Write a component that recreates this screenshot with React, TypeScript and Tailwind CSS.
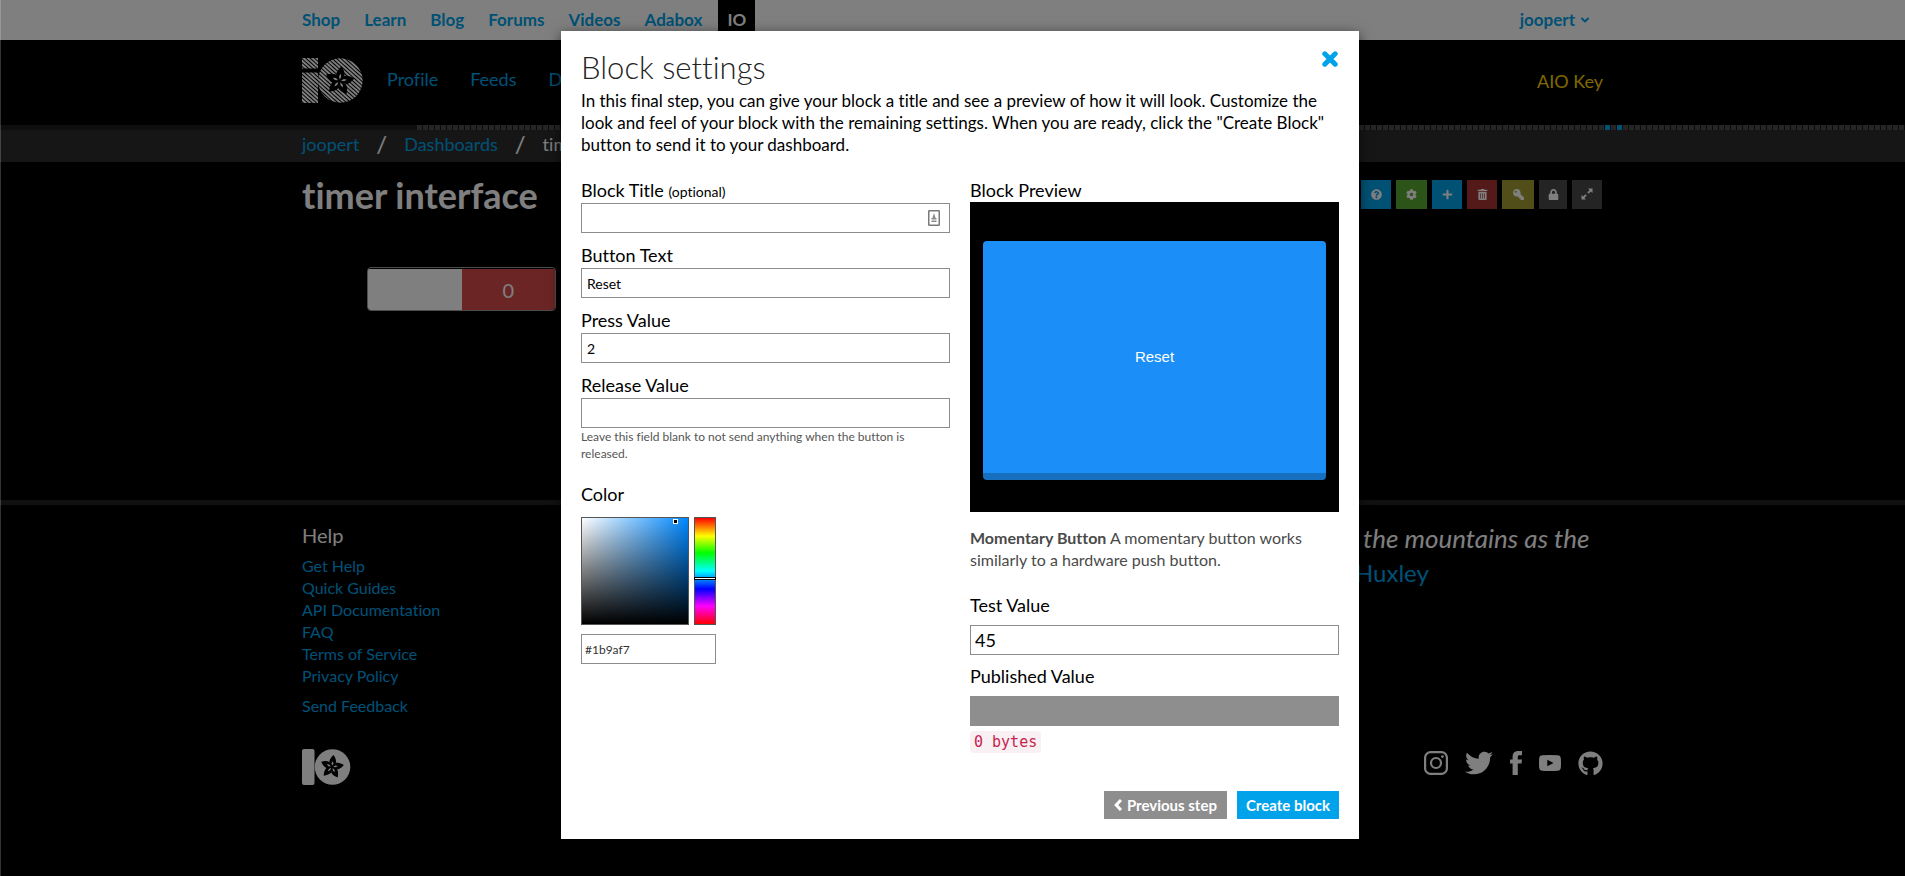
import React from 'react';
import { FaQuestionCircle, FaCog, FaPlus, FaTrashAlt, FaKey, FaLock, FaTwitter, FaGithub } from 'react-icons/fa';
import { ChevronDown } from 'lucide-react';

const PETALS = [0, 72, 144, 216, 288];

function Flower({ x, y, scale }: { x: number; y: number; scale: number }) {
  return (
    <g transform={`translate(${x} ${y}) rotate(8) scale(${scale})`}>
      {PETALS.map((a) => (
        <path key={a} transform={`rotate(${a})`} d="M0 -12 C2 -9.6 3.6 -7 3.3 -4.6 L1 0 L-1 0 L-3.3 -4.6 C-3.6 -7 -2 -9.6 0 -12Z" fill="#000" />
      ))}
      {PETALS.map((a) => (
        <path key={a} transform={`rotate(${a})`} d="M0 -1.2 L0.9 -3.6 L0 -6 L-0.9 -3.6Z" fill="#fff" />
      ))}
    </g>
  );
}

function StripedLogo() {
  return (
    <svg viewBox="0 0 61 45" className="h-[45px] w-[61px]" aria-label="Adafruit IO" role="img">
      <defs>
        <pattern id="stripes" width="2.9" height="2.9" patternUnits="userSpaceOnUse" patternTransform="rotate(-48)">
          <rect width="1.9" height="2.9" fill="#fff" />
        </pattern>
      </defs>
      <path d="M0 0H16V10.5H0Z M0 14.5H16V45H0Z" fill="url(#stripes)" />
      <circle cx="38.3" cy="22.5" r="22.3" fill="url(#stripes)" />
      <Flower x={37.5} y={23} scale={1.25} />
    </svg>
  );
}

function SolidLogo() {
  return (
    <svg viewBox="0 0 49 36" className="h-9 w-[49px]" aria-label="Adafruit IO" role="img">
      <rect width="12.5" height="36" rx="2" fill="#fff" />
      <circle cx="30.5" cy="18" r="17.8" fill="#fff" />
      <Flower x={30} y={18} scale={1} />
    </svg>
  );
}

const SITE_LINKS = ['Shop', 'Learn', 'Blog', 'Forums', 'Videos', 'Adabox'];
const HELP_LINKS = ['Get Help', 'Quick Guides', 'API Documentation', 'FAQ', 'Terms of Service', 'Privacy Policy'];

function ExpandIcon() {
  return (
    <svg viewBox="0 0 12 12" className="size-3" fill="currentColor">
      <path d="M7 0.5H11.5V5L9.9 3.4L7.6 5.7L6.3 4.4L8.6 2.1Z M5 11.5H0.5V7L2.1 8.6L4.4 6.3L5.7 7.6L3.4 9.9Z" />
    </svg>
  );
}

const TOOLS = [
  { label: 'Help', style: 'w-[30px] bg-[#00a2e9]', icon: <FaQuestionCircle /> },
  { label: 'Settings', style: 'w-[31px] bg-[#5aa830]', icon: <FaCog /> },
  { label: 'Add block', style: 'w-[30px] bg-[#00a2e9]', icon: <FaPlus /> },
  { label: 'Delete', style: 'w-[30px] bg-[#a93434]', icon: <FaTrashAlt /> },
  { label: 'Key', style: 'w-8 bg-[#a39c34]', icon: <FaKey className="-scale-x-100" /> },
  { label: 'Lock', style: 'w-7 bg-[#484848]', icon: <FaLock /> },
  { label: 'Full screen', style: 'w-[30px] bg-[#484848]', icon: <ExpandIcon /> },
];

function Page() {
  return (
    <div className="min-h-screen bg-black text-white">
      <div className="h-10 bg-white">
        <div className="mx-auto flex h-full max-w-[1301px] justify-between text-[17px] leading-5 font-bold text-[#00a2e9]">
          <nav className="flex items-center gap-6">
            {SITE_LINKS.map((l) => (
              <a key={l} href="#">{l}</a>
            ))}
            <a href="#" className="-ml-2 flex h-full w-[37px] items-center justify-center bg-black text-white">IO</a>
          </nav>
          <button type="button" className="mr-3 flex items-center gap-1">
            joopert <ChevronDown className="size-3" strokeWidth={4} />
          </button>
        </div>
      </div>

      <header className="mx-auto flex h-[85px] max-w-[1301px] items-center justify-between pb-1 text-lg">
        <div className="flex items-center">
          <StripedLogo />
          <nav className="ml-6 flex gap-8 pb-1 text-[#00a2e9]">
            <a href="#">Profile</a>
            <a href="#">Feeds</a>
            <a href="#">Dashboards</a>
          </nav>
        </div>
        <a href="#" className="text-[#ffd000]">AIO Key</a>
      </header>

      <div className="flex h-[5px] bg-[#1d1d1d]">
        <div className="w-[417px]" />
        <div className="flex flex-1 bg-[repeating-linear-gradient(90deg,#4a4a4a_0_5px,#151515_5px_6px)]">
          <span className="ml-[1188px] w-[5px] bg-[#00a2e9]" />
          <span className="ml-[7px] w-[5px] bg-[#00a2e9]" />
        </div>
      </div>

      <div className="h-8 bg-[#2d2d2d]">
        <div className="mx-auto flex h-full max-w-[1301px] items-center gap-[17px] pb-1 text-lg">
          <a href="#" className="text-[#00a2e9]">joopert</a>
          <span className="text-2xl leading-6">/</span>
          <a href="#" className="text-[#00a2e9]">Dashboards</a>
          <span className="text-2xl leading-6">/</span>
          <span>timer interface</span>
        </div>
      </div>

      <div className="mx-auto flex h-[66px] max-w-[1301px] items-center justify-between">
        <h1 className="text-4xl font-bold">timer interface</h1>
        <div className="flex gap-[5px] pr-px pb-0.5">
          {TOOLS.map((t) => (
            <button key={t.label} type="button" aria-label={t.label} className={`flex h-[29px] items-center justify-center text-[11px] ${t.style}`}>
              {t.icon}
            </button>
          ))}
        </div>
      </div>

      <main className="mx-auto h-[272px] max-w-[1301px] px-[65px] pt-[39px]">
        <button type="button" className="flex h-11 w-[189px] overflow-hidden rounded border border-[#999] pt-px text-xl">
          <span className="h-full flex-1 bg-white" />
          <span className="flex h-full flex-1 items-center justify-center bg-[#d64a4a]">0</span>
        </button>
      </main>

      <footer className="border-t-5 border-[#222] pt-4">
        <div className="mx-auto flex max-w-[1301px] justify-between">
          <div>
            <h2 className="text-xl leading-7">Help</h2>
            <ul className="pt-1.5 text-base leading-[22px] text-[#00a2e9]">
              {HELP_LINKS.map((l) => (
                <li key={l}><a href="#">{l}</a></li>
              ))}
              <li className="pt-2"><a href="#">Send Feedback</a></li>
            </ul>
          </div>
          <blockquote className="w-60 text-[26px] leading-[34px]">
            <p className="italic">the mountains as the</p>
            <a href="#" className="-ml-2 text-2xl text-[#00a2e9]">Huxley</a>
          </blockquote>
        </div>
        <div className="mx-auto flex max-w-[1301px] items-center justify-between pt-8">
          <SolidLogo />
          <div className="flex items-center gap-[17px] pb-2">
            <a href="#" aria-label="Instagram">
              <svg viewBox="0 0 24 24" className="size-6" fill="none" stroke="currentColor" strokeWidth="2.2">
                <rect x="1.1" y="1.1" width="21.8" height="21.8" rx="5.5" />
                <circle cx="12" cy="12" r="5" />
                <circle cx="18.4" cy="5.6" r="1.4" fill="currentColor" stroke="none" />
              </svg>
            </a>
            <a href="#" aria-label="Twitter"><FaTwitter className="size-7" /></a>
            <a href="#" aria-label="Facebook">
              <svg viewBox="0 0 12 24" className="h-6 w-3" fill="currentColor">
                <path d="M2.6 24V12.6H0V8.6H2.6V5.8C2.6 2.2 4.4 0 8.2 0H12V4.2H9.6C8.2 4.2 7.8 4.8 7.8 6V8.6H12L11.5 12.6H7.8V24Z" />
              </svg>
            </a>
            <a href="#" aria-label="YouTube">
              <svg viewBox="0 0 22 16" className="h-4 w-[22px]" fill="currentColor">
                <path fillRule="evenodd" d="M3 0.3Q11 -0.3 19 0.3Q21.6 0.5 21.8 3Q22.2 8 21.8 13Q21.6 15.5 19 15.7Q11 16.3 3 15.7Q0.4 15.5 0.2 13Q-0.2 8 0.2 3Q0.4 0.5 3 0.3Z M8.3 4.8V11.2L14.5 8Z" />
              </svg>
            </a>
            <a href="#" aria-label="GitHub"><FaGithub className="size-[25px]" /></a>
          </div>
        </div>
      </footer>
    </div>
  );
}

function Field({ id, label, note, value }: { id: string; label: string; note?: string; value?: string }) {
  return (
    <div>
      <label htmlFor={id} className="block text-lg leading-6 text-black">
        {label} {note && <span className="text-sm">{note}</span>}
      </label>
      <div className="relative mt-px">
        <input id={id} defaultValue={value} className="block h-[30px] w-full border border-[#8c8c8c] bg-white px-[5px] text-sm text-black outline-none" />
        {note && (
          <svg viewBox="0 0 12 16" className="absolute top-[7px] right-[10px] h-4 w-3">
            <rect x="0.75" y="0.75" width="10.5" height="14.5" rx="0.5" fill="#fff" stroke="#7a7a7a" strokeWidth="1.5" />
            <path d="M6 3L7.6 8H4.4Z M3.5 8H8.5V9.5H3.5Z M3.5 10.5H8.5V12H3.5Z" fill="#8a8a8a" />
          </svg>
        )}
      </div>
    </div>
  );
}

function Modal() {
  return (
    <div role="dialog" aria-labelledby="dialog-title" className="w-[798px] bg-white p-5 pt-4 text-[#333] shadow-[0_3px_12px_rgba(0,0,0,0.6)]">
      <div className="flex items-start justify-between">
        <h2 id="dialog-title" className="pb-0.5 text-[31px] leading-10 font-light text-[#222]">Block settings</h2>
        <button type="button" aria-label="Close" className="mt-1 mr-px text-[#00a2e9]">
          <svg viewBox="0 0 16 16" className="size-4" stroke="currentColor" strokeWidth="5" strokeLinecap="round">
            <path d="M2.8 2.8L13.2 13.2M13.2 2.8L2.8 13.2" />
          </svg>
        </button>
      </div>
      <p className="pt-px text-[17px] leading-[22px] text-black">
        In this final step, you can give your block a title and see a preview of how it will look. Customize the look and feel of
        your block with the remaining settings. When you are ready, click the "Create Block" button to send it to your dashboard.
      </p>

      <div className="grid grid-cols-2 gap-5 pt-[22px]">
        <div>
          <div className="flex flex-col gap-2.5">
            <Field id="title" label="Block Title" note="(optional)" />
            <Field id="text" label="Button Text" value="Reset" />
            <Field id="press" label="Press Value" value="2" />
            <Field id="release" label="Release Value" />
          </div>
          <p className="text-xs leading-[17px] text-[#555]">Leave this field blank to not send anything when the button is released.</p>
          <label htmlFor="color" className="block pt-5 text-lg leading-6 text-black">Color</label>
          <div className="flex gap-[5px] pt-[11px]">
            <div className="relative size-[108px] border border-[#555] bg-[linear-gradient(to_top,#000,transparent),linear-gradient(to_right,#fff,#0088ff)]">
              <span className="absolute top-px left-[91px] size-[5px] border border-white bg-black" />
            </div>
            <div className="relative h-[108px] w-[22px] border border-[#555] bg-[linear-gradient(#f00,#ff0_17%,#0f0_33%,#0ff_50%,#00f_67%,#f0f_83%,#f00)]">
              <span className="absolute inset-x-[-1px] top-[59px] h-[3px] border border-black bg-white" />
            </div>
          </div>
          <input id="color" defaultValue="#1b9af7" className="mt-[9px] block h-[30px] w-[135px] border border-[#8c8c8c] px-[3px] text-xs text-[#333] outline-none" />
        </div>

        <div>
          <h3 className="text-lg leading-6 text-black">Block Preview</h3>
          <div className="bg-black px-[13px] pt-[39px] pb-8">
            <button type="button" className="block h-[239px] w-full rounded border-b-7 border-[#1670bf] bg-[#1b8ff7] font-['Liberation_Sans',sans-serif] text-[15px] text-white">
              Reset
            </button>
          </div>
          <p className="pt-[15px] text-base leading-[22px] text-[#4a4a4a]">
            <strong>Momentary Button</strong> A momentary button works similarly to a hardware push button.
          </p>
          <label htmlFor="test" className="block pt-5 text-lg leading-7 text-black">Test Value</label>
          <input id="test" defaultValue="45" className="mt-1.5 block h-[30px] w-full border border-[#8c8c8c] px-1 text-lg text-black outline-none" />
          <label htmlFor="published" className="block pt-[7px] text-lg leading-7 text-black">Published Value</label>
          <input id="published" readOnly className="mt-1.5 block h-[30px] w-full bg-[#8e8e8e] px-1 outline-none" />
          <code className="mt-[5px] inline-block rounded bg-[#f9f0f3] px-1 font-['DejaVu_Sans_Mono',monospace] text-[15px] leading-[22px] text-[#c7254e]">0 bytes</code>
        </div>
      </div>

      <div className="flex justify-end gap-2.5 pt-[38px] text-[15px] font-bold text-white">
        <button type="button" className="flex h-7 items-center gap-[5px] bg-[#8e8e8e] px-2.5">
          <svg viewBox="0 0 8 12" className="h-3 w-2" fill="none" stroke="currentColor" strokeWidth="3">
            <path d="M7 1L2.2 6L7 11" />
          </svg>
          Previous step
        </button>
        <button type="button" className="h-7 bg-[#00a2e9] px-[9px]">Create block</button>
      </div>
    </div>
  );
}

export default function App() {
  return (
    <div className="relative font-['Lato',sans-serif] [font-variant-ligatures:none]">
      <Page />
      <div className="absolute inset-0 flex items-start justify-center overflow-hidden border-l border-white/20 bg-black/50 pt-[31px] pl-[14px]">
        <Modal />
      </div>
    </div>
  );
}
